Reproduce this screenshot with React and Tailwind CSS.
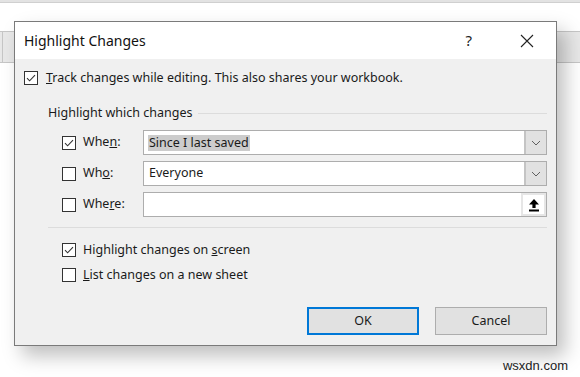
import React from "react";

const Box = ({ checked }) => (
  <span className="w-[14px] h-[14px] border border-[#333333] bg-white flex items-center justify-center shrink-0">
    {checked && (
      <svg width="12" height="12" viewBox="0 0 12 12">
        <path d="M2 6.2 L4.6 8.8 L10 3.2" fill="none" stroke="#333" strokeWidth="1.1" />
      </svg>
    )}
  </span>
);

const Chevron = () => (
  <svg width="10" height="6" viewBox="0 0 10 6">
    <path d="M1 1 L5 5 L9 1" fill="none" stroke="#606060" strokeWidth="1" />
  </svg>
);

const Row = ({ checked, label, children }) => (
  <div className="flex items-center h-[25px]">
    <div className="w-[95px] flex items-center pl-[14px] gap-[7px]">
      <Box checked={checked} />
      <span>{label}</span>
    </div>
    <div className="flex-1 h-full">{children}</div>
  </div>
);

export default function App() {
  return (
    <div
      className="relative w-[580px] h-[377px] bg-white overflow-hidden text-[12.5px] text-[#1a1a1a]"
      style={{ fontFamily: '"Noto Sans", "Open Sans", sans-serif' }}
    >
      {/* excel window behind */}
      <div className="h-[3px] bg-[#e3e3e3] border-b border-[#d0d0d0]" />
      <div className="h-[28px] bg-white" />
      <div className="h-[32px] bg-[#e8e8e8] border-y border-[#c6c6c6] flex">
        <div className="w-[2px]" />
        <div className="w-px bg-[#c6c6c6]" />
      </div>

      {/* dialog */}
      <div className="absolute left-[14px] top-[21px] w-[543px] h-[325px] border border-[#7a7a7a] bg-[#f0f0f0] shadow-[8px_10px_18px_rgba(0,0,0,0.25)] flex flex-col">
        <div className="h-[37px] bg-white flex items-center pl-[9px] pr-[22px] shrink-0">
          <span className="text-[14px] text-[#111]">Highlight Changes</span>
          <span className="ml-auto text-[15px] mr-[48px] text-[#222]">?</span>
          <svg width="14" height="14" viewBox="0 0 14 14">
            <path d="M1 1 L13 13 M13 1 L1 13" stroke="#222" strokeWidth="1.1" />
          </svg>
        </div>

        <div className="pl-[9px] pr-[9px]">
          <div className="flex items-center gap-[8px] mt-[12px] h-[14px]">
            <Box checked />
            <span>
              <u>T</u>rack changes while editing. This also shares your workbook.
            </span>
          </div>

          <div className="flex items-center mt-[20px] pl-[24px] h-[16px]">
            <span>Highlight which changes</span>
            <div className="flex-1 h-px bg-[#dcdcdc] ml-[6px]" />
          </div>

          <div className="pl-[24px] mt-[9px] flex flex-col gap-[6px]">
            <Row checked label={<>Whe<u>n</u>:</>}>
              <div className="h-full border border-[#adadad] bg-white flex">
                <div className="flex-1 flex items-center pl-[4px]">
                  <span className="bg-[#cccccc] px-px leading-[16px]">Since I last saved</span>
                </div>
                <div className="w-[22px] bg-[#e1e1e1] border-l-2 border-[#c4c4c4] flex items-center justify-center">
                  <Chevron />
                </div>
              </div>
            </Row>
            <Row label={<>Wh<u>o</u>:</>}>
              <div className="h-full border border-[#adadad] bg-white flex">
                <div className="flex-1 flex items-center pl-[5px]">Everyone</div>
                <div className="w-[22px] bg-[#e1e1e1] border-l-2 border-[#c4c4c4] flex items-center justify-center">
                  <Chevron />
                </div>
              </div>
            </Row>
            <Row label={<>Whe<u>r</u>e:</>}>
              <div className="h-full border border-[#adadad] bg-white flex">
                <div className="flex-1" />
                <div className="w-[25px] bg-[#e6e6e6] p-[2px]">
                  <div className="h-full bg-white flex items-center justify-center">
                    <svg width="12" height="14" viewBox="0 0 12 14">
                      <path d="M6 1 L11 6.5 L7.6 6.5 L7.6 10 L4.4 10 L4.4 6.5 L1 6.5 Z" fill="#000" />
                      <rect x="1" y="11.5" width="10" height="2" fill="#000" />
                    </svg>
                  </div>
                </div>
              </div>
            </Row>
          </div>

          <div className="ml-[24px] mt-[10px] h-px bg-[#dcdcdc]" />

          <div className="pl-[38px] mt-[15px] flex flex-col gap-[11px]">
            <div className="flex items-center gap-[7px] h-[14px]">
              <Box checked />
              <span>
                Highlight changes on <u>s</u>creen
              </span>
            </div>
            <div className="flex items-center gap-[7px] h-[14px]">
              <Box />
              <span>
                <u>L</u>ist changes on a new sheet
              </span>
            </div>
          </div>

          <div className="flex justify-end gap-[16px] mt-[25px]">
            <button className="w-[112px] h-[28px] bg-[#e1e1e1] border-2 border-[#0078d7]">OK</button>
            <button className="w-[112px] h-[28px] bg-[#e1e1e1] border border-[#adadad]">Cancel</button>
          </div>
        </div>
      </div>

      <div
        className="absolute right-[12px] bottom-[2px] text-[13px] text-[#222]"
        style={{ fontFamily: '"Liberation Sans", sans-serif' }}
      >
        wsxdn.com
      </div>
    </div>
  );
}
